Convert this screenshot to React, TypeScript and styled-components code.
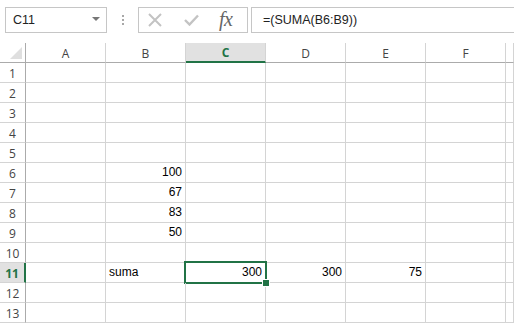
import * as React from 'react';
import styled, { createGlobalStyle } from 'styled-components';

const GREEN = '#217346';
const GRID = '#d4d4d4';

const columns = ['A', 'B', 'C', 'D', 'E', 'F', ''];
const rowCount = 13;

type CellData = { value: string; align?: 'left' | 'right' };

const cells: Record<string, CellData> = {
  B6: { value: '100' },
  B7: { value: '67' },
  B8: { value: '83' },
  B9: { value: '50' },
  B11: { value: 'suma', align: 'left' },
  C11: { value: '300' },
  D11: { value: '300' },
  E11: { value: '75' },
};

const activeCol = 'C';
const activeRow = 11;

const GlobalStyle = createGlobalStyle`
  html, body {
    margin: 0;
    padding: 0;
    background: #ffffff;
    overflow: hidden;
  }
  body {
    font-family: "Liberation Sans", Arial, sans-serif;
  }
`;

const CloseIcon = () => (
  <svg width="14" height="14" viewBox="0 0 14 14">
    <path d="M1 1 L13 13 M13 1 L1 13" stroke="#c3c3c3" strokeWidth="2" fill="none" />
  </svg>
);

const CheckIcon = () => (
  <svg width="15" height="12" viewBox="0 0 15 12">
    <path d="M1 6 L5.5 10.5 L14 1.5" stroke="#c3c3c3" strokeWidth="2.4" fill="none" />
  </svg>
);

const App: React.FC = () => (
  <Sheet.Page>
    <GlobalStyle />
    <Bar.Wrap>
      <Bar.NameBox>
        <span>C11</span>
        <Bar.Caret />
      </Bar.NameBox>
      <Bar.Grip>
        <i />
        <i />
        <i />
      </Bar.Grip>
      <Bar.Tools>
        <Bar.Tool><CloseIcon /></Bar.Tool>
        <Bar.Tool><CheckIcon /></Bar.Tool>
        <Bar.Fx>fx</Bar.Fx>
      </Bar.Tools>
      <Bar.Formula>=(SUMA(B6:B9))</Bar.Formula>
    </Bar.Wrap>
    <Sheet.Grid>
      <Sheet.Corner>
        <Sheet.Triangle />
      </Sheet.Corner>
      {columns.map((col, idx) => (
        <Sheet.ColHead key={`col-${idx}`} $active={col === activeCol}>
          {col}
        </Sheet.ColHead>
      ))}
      {Array.from({ length: rowCount }, (_, idx) => idx + 1).map((row) => (
        <React.Fragment key={`row-${row}`}>
          <Sheet.RowHead $active={row === activeRow}>{row}</Sheet.RowHead>
          {columns.map((col, idx) => {
            const data = col ? cells[`${col}${row}`] : undefined;
            const selected = col === activeCol && row === activeRow;
            return (
              <Sheet.Cell
                key={`cell-${row}-${idx}`}
                $align={data?.align ?? 'right'}
                $selected={selected}
              >
                {data?.value}
              </Sheet.Cell>
            );
          })}
        </React.Fragment>
      ))}
    </Sheet.Grid>
  </Sheet.Page>
);

export default App;

const Bar = {
  Wrap: styled.div`
    height: 43px;
    box-sizing: border-box;
    padding: 7px 0 0 5px;
    display: flex;
    align-items: flex-start;
    background: #ffffff;
  `,
  NameBox: styled.div`
    width: 102px;
    height: 26px;
    box-sizing: border-box;
    border: 1px solid #c6c6c6;
    display: flex;
    align-items: center;
    justify-content: space-between;
    padding: 0 6px 0 7px;
    font-size: 12.5px;
    color: #222;
  `,
  Caret: styled.div`
    width: 0;
    height: 0;
    border-left: 4px solid transparent;
    border-right: 4px solid transparent;
    border-top: 4px solid #777;
    margin-top: -2px;
  `,
  Grip: styled.div`
    width: 31px;
    height: 26px;
    display: flex;
    flex-direction: column;
    align-items: center;
    justify-content: center;
    gap: 2px;

    i {
      width: 2px;
      height: 2px;
      background: #a8a8a8;
    }
  `,
  Tools: styled.div`
    width: 110px;
    height: 26px;
    box-sizing: border-box;
    border: 1px solid #c6c6c6;
    display: flex;
    align-items: center;
    padding: 0 0 0 9px;
  `,
  Tool: styled.div`
    width: 36px;
    display: flex;
    align-items: center;
    justify-content: flex-start;
  `,
  Fx: styled.span`
    font-family: "Liberation Serif", "Times New Roman", serif;
    font-style: italic;
    font-size: 20px;
    color: #666666;
    letter-spacing: -0.5px;
    margin-left: -1px;
    margin-top: -2px;
  `,
  Formula: styled.div`
    flex: 1;
    height: 26px;
    box-sizing: border-box;
    margin-left: 3px;
    border: 1px solid #c6c6c6;
    border-right: none;
    display: flex;
    align-items: center;
    padding-left: 11px;
    font-size: 12.5px;
    color: #222;
  `,
};

const Sheet = {
  Page: styled.div`
    width: 514px;
    height: 323px;
    overflow: hidden;
    background: #ffffff;
  `,
  Grid: styled.div`
    display: grid;
    grid-template-columns: 26px repeat(6, 80px) 1fr;
    grid-auto-rows: 20px;
    width: 514px;
  `,
  Corner: styled.div`
    position: relative;
    box-sizing: border-box;
    border-right: 1px solid #ababab;
    border-bottom: 1px solid #ababab;
  `,
  Triangle: styled.div`
    position: absolute;
    right: 3px;
    bottom: 3px;
    width: 0;
    height: 0;
    border-left: 12px solid transparent;
    border-bottom: 12px solid #dfdfdf;
  `,
  ColHead: styled.div<{ $active: boolean }>`
    box-sizing: border-box;
    display: flex;
    align-items: center;
    justify-content: center;
    font-family: "Open Sans", "Liberation Sans", sans-serif;
    font-size: 12px;
    padding-top: 1px;
    border-right: 1px solid ${GRID};
    border-bottom: ${(p) => (p.$active ? `2px solid ${GREEN}` : '1px solid #ababab')};
    background: ${(p) => (p.$active ? '#e1e1e1' : '#ffffff')};
    color: ${(p) => (p.$active ? GREEN : '#444444')};
    font-weight: ${(p) => (p.$active ? 700 : 400)};
  `,
  RowHead: styled.div<{ $active: boolean }>`
    box-sizing: border-box;
    display: flex;
    align-items: center;
    justify-content: center;
    font-family: "Open Sans", "Liberation Sans", sans-serif;
    font-size: 12px;
    padding-top: 1px;
    border-bottom: 1px solid ${GRID};
    border-right: ${(p) => (p.$active ? `2px solid ${GREEN}` : '1px solid #ababab')};
    background: ${(p) => (p.$active ? '#e1e1e1' : '#ffffff')};
    color: ${(p) => (p.$active ? GREEN : '#444444')};
    font-weight: ${(p) => (p.$active ? 700 : 400)};
  `,
  Cell: styled.div<{ $align: 'left' | 'right'; $selected: boolean }>`
    position: relative;
    box-sizing: border-box;
    display: flex;
    align-items: flex-end;
    justify-content: ${(p) => (p.$align === 'left' ? 'flex-start' : 'flex-end')};
    padding: 0 3px 3px 3px;
    font-size: 12px;
    line-height: 14px;
    color: #000000;
    border-right: 1px solid ${GRID};
    border-bottom: 1px solid ${GRID};

    ${(p) =>
      p.$selected &&
      `
      &::before {
        content: '';
        position: absolute;
        left: -2px;
        top: -2px;
        right: -2px;
        bottom: -2px;
        border: 2px solid ${GREEN};
        pointer-events: none;
      }
      &::after {
        content: '';
        position: absolute;
        right: -5px;
        bottom: -5px;
        width: 6px;
        height: 6px;
        background: ${GREEN};
        border: 1px solid #ffffff;
        z-index: 1;
      }
    `}
  `,
};
